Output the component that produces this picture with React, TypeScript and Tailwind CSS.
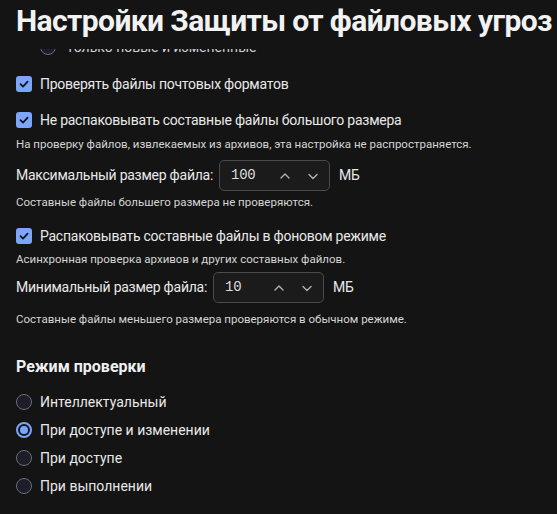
import React from "react";

const Check = () => (
  <div className="w-4 h-4 rounded-[3px] bg-[#7ba6f9] flex items-center justify-center shrink-0">
    <svg width="12" height="12" viewBox="0 0 12 12" fill="none">
      <path d="M2.5 6.2 L5 8.6 L9.6 3.6" stroke="#0f1420" strokeWidth="1.8" strokeLinecap="round" strokeLinejoin="round" />
    </svg>
  </div>
);

const Radio = ({ on }: { on?: boolean }) =>
  on ? (
    <div className="w-4 h-4 rounded-full border-2 border-[#7ba6f9] bg-[#14141c] flex items-center justify-center shrink-0">
      <div className="w-2 h-2 rounded-full bg-[#7ba6f9]" />
    </div>
  ) : (
    <div className="w-4 h-4 rounded-full border-[1.5px] border-[#6e6e72] bg-[#1d1d29] shrink-0" />
  );

const Spinner = ({ value }: { value: string }) => (
  <div className="w-[111px] shrink-0 h-[31px] rounded-[5px] border border-[#4a4a4a] bg-[#1b1b1b] flex items-center pl-[11px] pr-[10px]">
    <span className="font-['Liberation_Mono',monospace] text-[14px] text-[#dcdcdc] flex-1">{value}</span>
    <svg width="12" height="12" viewBox="0 0 12 12" fill="none" className="mr-[16px]">
      <path d="M2 8 L6 4 L10 8" stroke="#b0b0b0" strokeWidth="1.4" strokeLinecap="round" strokeLinejoin="round" />
    </svg>
    <svg width="12" height="12" viewBox="0 0 12 12" fill="none">
      <path d="M2 4.5 L6 8.5 L10 4.5" stroke="#b0b0b0" strokeWidth="1.4" strokeLinecap="round" strokeLinejoin="round" />
    </svg>
  </div>
);

export default function App() {
  return (
    <div className="w-[557px] h-[514px] bg-[#141414] overflow-hidden font-['Roboto',sans-serif] text-[#e8e8e8]">
      <div className="relative z-10 h-[49px] px-4 pt-[3px] bg-[#141414]">
        <h1 className="text-[30px] leading-[36px] font-bold text-[#f2f2f2] tracking-[-0.6px] whitespace-nowrap">
          Настройки Защиты от файловых угроз
        </h1>
      </div>
      <div className="h-[6px] overflow-hidden">
        <div className="-mt-[12px] h-[20px] pl-10 flex items-center gap-[10px]">
          <div className="w-4 h-4 rounded-full border-[1.5px] border-[#6e6e72] bg-[#1d1d29]" />
          <span className="text-[14px] text-[#cfcfcf]">Только новые и измененные</span>
        </div>
      </div>

      <div className="px-4 tracking-[-0.25px]">
        <div className="mt-[19px] h-5 flex items-center gap-2">
          <Check />
          <span className="text-[14px]">Проверять файлы почтовых форматов</span>
        </div>
        <div className="mt-4 h-5 flex items-center gap-2">
          <Check />
          <span className="text-[14px]">Не распаковывать составные файлы большого размера</span>
        </div>
        <div className="mt-[7px] h-4 flex items-center text-[11.5px] tracking-normal text-[#d4d4d4] whitespace-nowrap">
          На проверку файлов, извлекаемых из архивов, эта настройка не распространяется.
        </div>
        <div className="mt-[7px] h-[31px] flex items-center">
          <span className="text-[14px] w-[203px] shrink-0 whitespace-nowrap">Максимальный размер файла:</span>
          <Spinner value="100" />
          <span className="text-[14px] ml-[9px]">МБ</span>
        </div>
        <div className="mt-1 h-4 flex items-center text-[11.5px] tracking-normal text-[#d4d4d4] whitespace-nowrap">
          Составные файлы большего размера не проверяются.
        </div>
        <div className="mt-[15px] h-5 flex items-center gap-2">
          <Check />
          <span className="text-[14px]">Распаковывать составные файлы в фоновом режиме</span>
        </div>
        <div className="mt-[6px] h-4 flex items-center text-[11.5px] tracking-normal text-[#d4d4d4] whitespace-nowrap">
          Асинхронная проверка архивов и других составных файлов.
        </div>
        <div className="mt-1 h-[31px] flex items-center">
          <span className="text-[14px] w-[197px] shrink-0 whitespace-nowrap">Минимальный размер файла:</span>
          <Spinner value="10" />
          <span className="text-[14px] ml-[9px]">МБ</span>
        </div>
        <div className="mt-[9px] h-4 flex items-center text-[11.5px] tracking-normal text-[#d4d4d4] whitespace-nowrap">
          Составные файлы меньшего размера проверяются в обычном режиме.
        </div>

        <div className="mt-[28px] h-[22px] flex items-center text-[16px] font-bold tracking-normal text-[#f0f0f0]">
          Режим проверки
        </div>
        <div className="mt-[14px] flex flex-col gap-2 tracking-normal">
          <div className="h-5 flex items-center gap-2">
            <Radio />
            <span className="text-[14px]">Интеллектуальный</span>
          </div>
          <div className="h-5 flex items-center gap-2">
            <Radio on />
            <span className="text-[14px]">При доступе и изменении</span>
          </div>
          <div className="h-5 flex items-center gap-2">
            <Radio />
            <span className="text-[14px]">При доступе</span>
          </div>
          <div className="h-5 flex items-center gap-2">
            <Radio />
            <span className="text-[14px]">При выполнении</span>
          </div>
        </div>
      </div>
    </div>
  );
}
